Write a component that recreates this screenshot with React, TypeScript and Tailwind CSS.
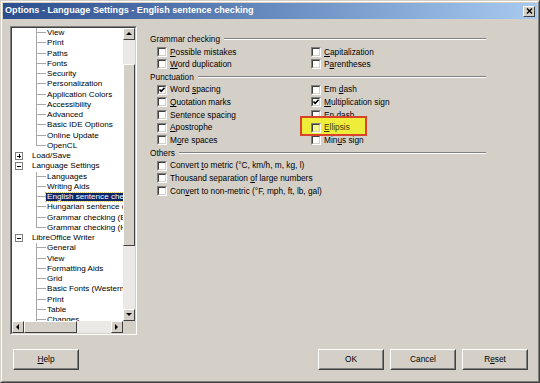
import React from 'react';

type TreeItem = {
  label: string;
  level: 0 | 1;
  box?: '+' | '-';
  last?: boolean;
  selected?: boolean;
};

const TREE: TreeItem[] = [
  { label: 'View', level: 1 },
  { label: 'Print', level: 1 },
  { label: 'Paths', level: 1 },
  { label: 'Fonts', level: 1 },
  { label: 'Security', level: 1 },
  { label: 'Personalization', level: 1 },
  { label: 'Application Colors', level: 1 },
  { label: 'Accessibility', level: 1 },
  { label: 'Advanced', level: 1 },
  { label: 'Basic IDE Options', level: 1 },
  { label: 'Online Update', level: 1 },
  { label: 'OpenCL', level: 1, last: true },
  { label: 'Load/Save', level: 0, box: '+' },
  { label: 'Language Settings', level: 0, box: '-' },
  { label: 'Languages', level: 1 },
  { label: 'Writing Aids', level: 1 },
  { label: 'English sentence checking', level: 1, selected: true },
  { label: 'Hungarian sentence checking', level: 1 },
  { label: 'Grammar checking (English)', level: 1 },
  { label: 'Grammar checking (Hungarian)', level: 1, last: true },
  { label: 'LibreOffice Writer', level: 0, box: '-' },
  { label: 'General', level: 1 },
  { label: 'View', level: 1 },
  { label: 'Formatting Aids', level: 1 },
  { label: 'Grid', level: 1 },
  { label: 'Basic Fonts (Western)', level: 1 },
  { label: 'Print', level: 1 },
  { label: 'Table', level: 1 },
  { label: 'Changes', level: 1 },
];

// label with the mnemonic letter at index u underlined
function Mnemonic({ text, u }: { text: string; u?: number }) {
  if (u === undefined) return <>{text}</>;
  return (
    <>
      {text.slice(0, u)}
      <span className="underline underline-offset-[1px]">{text[u]}</span>
      {text.slice(u + 1)}
    </>
  );
}

function Arrow({ dir }: { dir: 'up' | 'down' | 'left' | 'right' }) {
  const pts = {
    up: '1,5 4,2 7,5',
    down: '1,2 4,5 7,2',
    left: '5,1 2,4 5,7',
    right: '2,1 5,4 2,7',
  }[dir];
  return (
    <svg width="8" height="8" viewBox="0 0 8 8">
      <polygon points={pts} fill="#000" />
    </svg>
  );
}

function ScrollBtn({ dir }: { dir: 'up' | 'down' | 'left' | 'right' }) {
  return (
    <div className="w-[12px] h-[12px] shrink-0 bg-[#d4d0c8] border border-t-white border-l-white border-r-[#404040] border-b-[#404040] flex items-center justify-center">
      <Arrow dir={dir} />
    </div>
  );
}

function TreeRow({ item }: { item: TreeItem }) {
  if (item.level === 0) {
    return (
      <div className="flex h-[10.25px] items-center whitespace-nowrap">
        <div className="w-[19px] h-full shrink-0 flex items-center">
          <div className="ml-[3px] w-[8px] h-[8px] border border-[#808080] bg-white flex items-center justify-center relative">
            <div className="w-[4px] h-px bg-black" />
            {item.box === '+' && <div className="absolute w-px h-[4px] bg-black" />}
          </div>
        </div>
        <span className="px-[1px]">{item.label}</span>
      </div>
    );
  }
  return (
    <div className="flex h-[10.25px] items-center whitespace-nowrap">
      <div className="w-[24px] shrink-0" />
      <div className="w-[10px] h-full shrink-0 flex flex-col">
        <div className="h-1/2 border-l border-b border-[#a8a8a8]" />
        <div className={item.last ? 'h-1/2' : 'h-1/2 border-l border-[#a8a8a8]'} />
      </div>
      <span
        className={
          item.selected
            ? 'px-[1px] bg-[#0a246a] text-white outline outline-1 outline-dotted outline-[#e0c060]'
            : 'px-[1px]'
        }
      >
        {item.label}
      </span>
    </div>
  );
}

function TreePanel() {
  return (
    <div className="ml-[8px] mt-[7px] w-[127px] h-[309px] border border-t-[#808080] border-l-[#808080] border-r-white border-b-white">
      <div className="w-full h-full border border-t-[#404040] border-l-[#404040] border-r-[#d4d0c8] border-b-[#d4d0c8] bg-white flex flex-col">
        <div className="flex flex-1 min-h-0">
          <div className="flex-1 overflow-hidden text-[8.1px] leading-none text-black">
            {TREE.map((item, i) => (
              <TreeRow key={i} item={item} />
            ))}
          </div>
          {/* vertical scrollbar */}
          <div className="w-[12px] flex flex-col bg-[#ebe9e5]">
            <ScrollBtn dir="up" />
            <div className="flex-1 flex flex-col">
              <div className="h-[24px]" />
              <div className="h-[182px] bg-[#d4d0c8] border border-t-white border-l-white border-r-[#404040] border-b-[#404040]" />
            </div>
            <ScrollBtn dir="down" />
          </div>
        </div>
        {/* horizontal scrollbar */}
        <div className="h-[12px] flex">
          <div className="flex-1 flex bg-[#ebe9e5]">
            <ScrollBtn dir="left" />
            <div className="w-[53px] bg-[#d4d0c8] border border-t-white border-l-white border-r-[#404040] border-b-[#404040]" />
            <div className="flex-1" />
            <ScrollBtn dir="right" />
          </div>
          <div className="w-[12px] bg-[#d4d0c8]" />
        </div>
      </div>
    </div>
  );
}

function Checkbox({ checked, tint }: { checked?: boolean; tint?: boolean }) {
  return (
    <div className="w-[10px] h-[10px] shrink-0 border border-t-[#808080] border-l-[#808080] border-r-white border-b-white">
      <div
        className={
          'w-full h-full border border-t-[#404040] border-l-[#404040] border-r-[#d4d0c8] border-b-[#d4d0c8] flex items-center justify-center ' +
          (tint ? 'bg-[#f6f690]' : 'bg-white')
        }
      >
        {checked && (
          <svg width="6" height="6" viewBox="0 0 6 6">
            <path d="M0.5 2.5 L2.2 4.4 L5.6 0.8" fill="none" stroke="#000" strokeWidth="1.6" />
          </svg>
        )}
      </div>
    </div>
  );
}

type Opt = { text: string; u?: number; checked?: boolean };

function CheckRow({ opt }: { opt: Opt }) {
  return (
    <div className="h-[12.67px] flex items-center pl-[7px] gap-[3px] whitespace-nowrap">
      <Checkbox checked={opt.checked} />
      <span>
        <Mnemonic text={opt.text} u={opt.u} />
      </span>
    </div>
  );
}

function SectionTitle({ title }: { title: string }) {
  return (
    <div className="h-[12.67px] flex items-center gap-[4px]">
      <span>{title}</span>
      <div className="flex-1 border-t border-b border-t-[#808080] border-b-white" />
    </div>
  );
}

const GRAMMAR: Opt[] = [
  { text: 'Possible mistakes', u: 0 },
  { text: 'Capitalization', u: 0 },
  { text: 'Word duplication', u: 0 },
  { text: 'Parentheses', u: 1 },
];

const PUNCT: Opt[] = [
  { text: 'Word spacing', u: 5, checked: true },
  { text: 'Em dash', u: 3 },
  { text: 'Quotation marks', u: 0 },
  { text: 'Multiplication sign', u: 0, checked: true },
  { text: 'Sentence spacing' },
  { text: 'En dash', u: 1 },
  { text: 'Apostrophe', u: 0 },
  { text: 'Ellipsis', u: 0 },
  { text: 'More spaces', u: 1 },
  { text: 'Minus sign', u: 3 },
];

const OTHERS: Opt[] = [
  { text: 'Convert to metric (°C, km/h, m, kg, l)', u: 8 },
  { text: 'Thousand separation of large numbers', u: 20 },
  { text: 'Convert to non-metric (°F, mph, ft, lb, gal)', u: 3 },
];

function EllipsisRow({ opt }: { opt: Opt }) {
  return (
    <div className="relative h-[12.67px] flex items-center pl-[7px] whitespace-nowrap">
      {/* highlight marker drawn over the screenshot */}
      <div className="absolute z-10 left-[-4px] top-[-5.7px] w-[67px] h-[20px] bg-[#eeee3a] border-2 border-[#d8432a]" />
      <div className="relative z-20 flex items-center gap-[3px]">
        <Checkbox tint />
        <span className="text-[#3a3a10]">
          <Mnemonic text={opt.text} u={opt.u} />
        </span>
      </div>
    </div>
  );
}

function OptionsPanel() {
  return (
    <div className="ml-[13px] mt-[13.7px] w-[336px] flex flex-col text-[8.3px] leading-none text-black">
      <SectionTitle title="Grammar checking" />
      <div className="grid grid-cols-[154px_1fr]">
        {GRAMMAR.map((o, i) => (
          <CheckRow key={i} opt={o} />
        ))}
      </div>
      <SectionTitle title="Punctuation" />
      <div className="grid grid-cols-[154px_1fr]">
        {PUNCT.map((o, i) =>
          o.text === 'Ellipsis' ? <EllipsisRow key={i} opt={o} /> : <CheckRow key={i} opt={o} />
        )}
      </div>
      <SectionTitle title="Others" />
      <div className="flex flex-col">
        {OTHERS.map((o, i) => (
          <CheckRow key={i} opt={o} />
        ))}
      </div>
    </div>
  );
}

function Button({ children }: { children: React.ReactNode }) {
  return (
    <div className="w-[66px] h-[21px] border border-t-white border-l-white border-r-[#404040] border-b-[#404040]">
      <div className="w-full h-full border border-t-[#d4d0c8] border-l-[#d4d0c8] border-r-[#808080] border-b-[#808080] flex items-center justify-center text-[8.3px] text-black">
        {children}
      </div>
    </div>
  );
}

export default function App() {
  return (
    <div className="w-[540px] h-[383px] bg-[#d4d0c8] border border-t-[#d4d0c8] border-l-[#d4d0c8] border-r-[#404040] border-b-[#404040] font-['Liberation_Sans',Arial,sans-serif] overflow-hidden">
      <div className="w-full h-full border border-t-white border-l-white border-r-[#808080] border-b-[#808080] flex flex-col">
        {/* Title bar */}
        <div className="h-[16px] mx-[1px] mt-[1px] bg-gradient-to-r from-[#2c4e8e] to-[#a8caf0] flex items-center justify-between pl-[2px] pr-[2px]">
          <span className="text-[9.1px] font-bold text-white whitespace-nowrap">
            Options - Language Settings - English sentence checking
          </span>
          <div className="w-[12px] h-[11px] bg-[#d4d0c8] border border-t-white border-l-white border-r-[#404040] border-b-[#404040] flex items-center justify-center">
            <svg width="7" height="6" viewBox="0 0 7 6">
              <path d="M1 0.5 L6 5.5 M6 0.5 L1 5.5" stroke="#000" strokeWidth="1.4" />
            </svg>
          </div>
        </div>

        {/* Body */}
        <div className="flex">
          <TreePanel />
          <OptionsPanel />
        </div>

        {/* Buttons */}
        <div className="flex items-center mt-[14px] pl-[11px] pr-[10px]">
          <div className="w-[67px]">
            <Button>
              <Mnemonic text="Help" u={0} />
            </Button>
          </div>
          <div className="flex-1" />
          <div className="flex gap-[6px]">
            <Button>OK</Button>
            <Button>Cancel</Button>
            <Button>
              <Mnemonic text="Reset" u={1} />
            </Button>
          </div>
        </div>
      </div>
    </div>
  );
}
